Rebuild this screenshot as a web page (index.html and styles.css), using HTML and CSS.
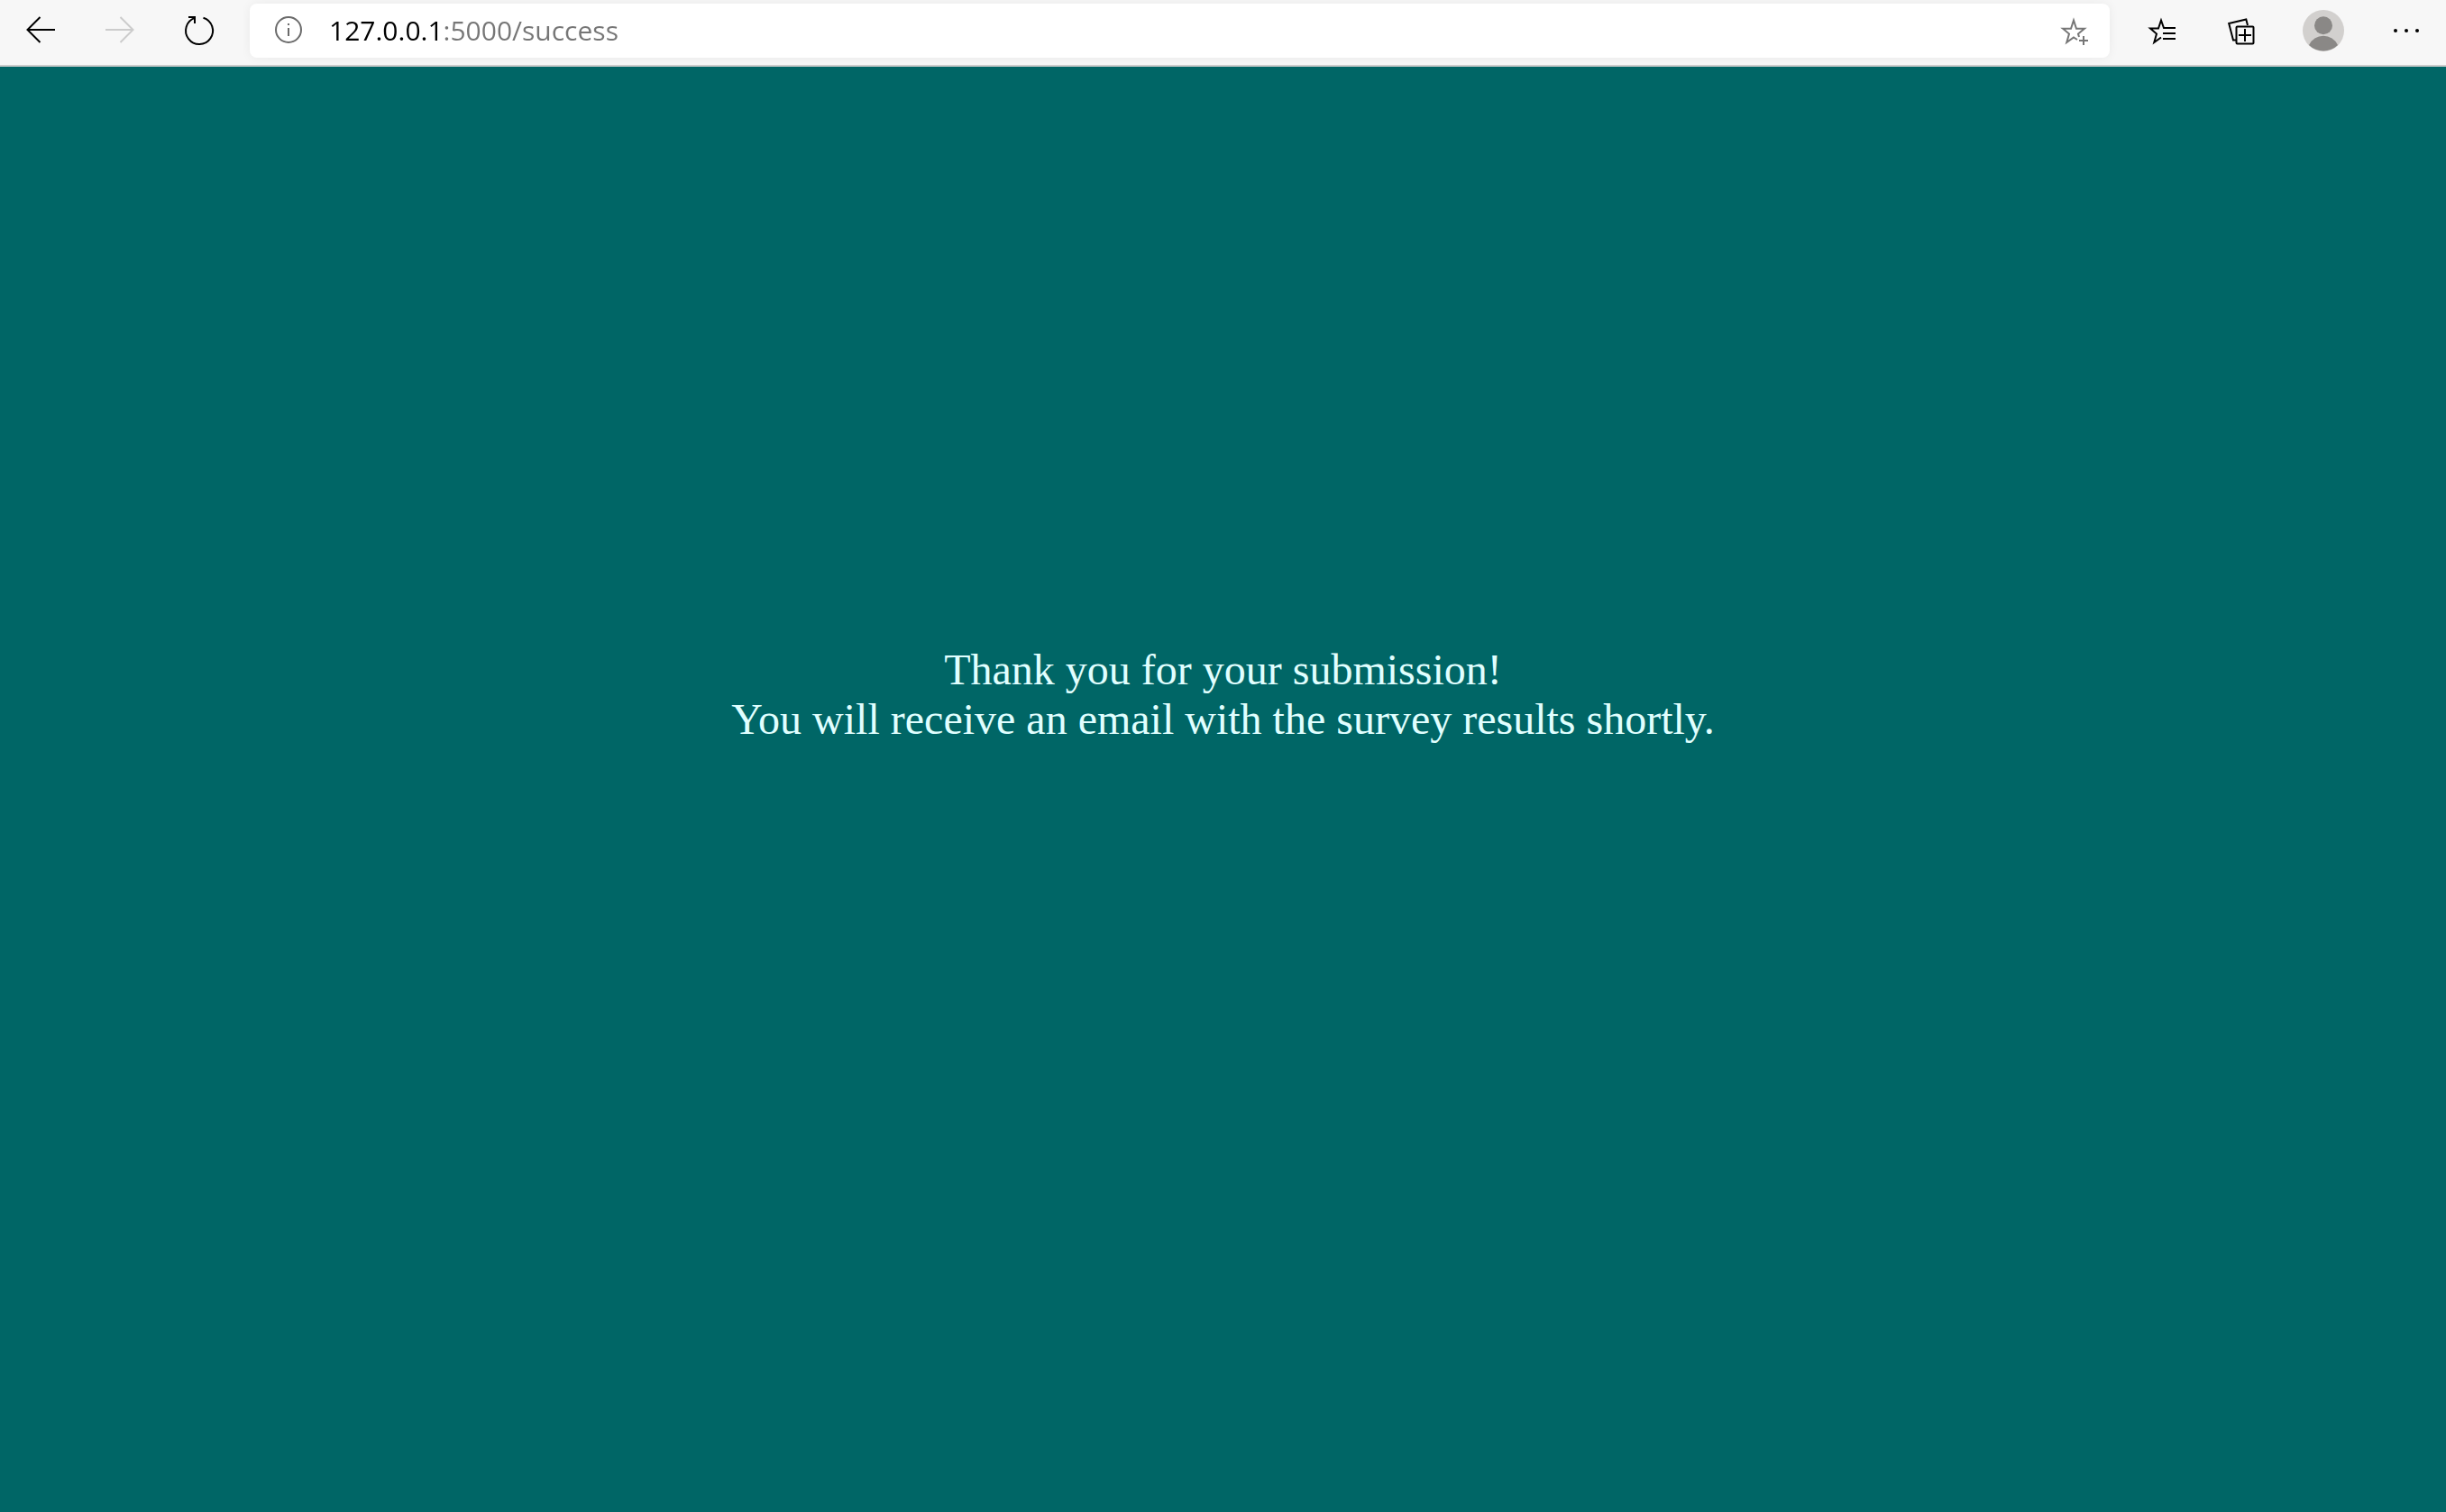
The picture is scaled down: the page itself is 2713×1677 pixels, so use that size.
FILE: index.html
```
<!DOCTYPE html>
<html lang="en">
<head>
<meta charset="utf-8">
<title>Survey submitted</title>
<link rel="stylesheet" href="styles.css">
</head>
<body>
<header class="toolbar">
  <nav class="group" aria-label="Navigation">
    <button class="tool" type="button" aria-label="Back">
      <svg class="icon" viewBox="0 0 60 60"><path d="M46 29H16M29.500 15l-14 14 14 14"/></svg>
    </button>
    <button class="tool" type="button" aria-label="Forward" disabled>
      <svg class="icon" viewBox="0 0 60 60"><path d="M14 29h30M30.500 15l14 14-14 14"/></svg>
    </button>
    <button class="tool" type="button" aria-label="Refresh">
      <svg class="icon" viewBox="0 0 60 60"><path d="M34.500 15.700A15 15 0 1 1 25 15.900M18 15H25V22"/></svg>
    </button>
  </nav>
  <form class="address">
    <button class="site-info" type="button" aria-label="View site information">
      <svg class="icon" viewBox="0 0 60 60"><circle cx="30" cy="29" r="14"/><path d="M30 27v9M30 22v2"/></svg>
    </button>
    <input class="url" type="text" aria-label="Address" value="127.0.0.1:5000/success" spellcheck="false">
    <button class="add-favorite" type="button" aria-label="Add this page to favorites">
      <svg class="icon" viewBox="0 0 60 60"><path d="M36 37L35 33.500 42 27.700H33L30 18.500 27 27.700H18L25 33.500 22.300 43 30 37.500 34 40M41 36v10M36 41h10"/></svg>
    </button>
  </form>
  <div class="group group-end">
    <button class="tool" type="button" aria-label="Favorites">
      <svg class="icon" viewBox="0 0 60 60"><path d="M46 27H33L30 18.500 27 27.500H18L25 33.500 22.300 43 30 37.500M32 33h14M32 39h14"/></svg>
    </button>
    <button class="tool" type="button" aria-label="Collections">
      <svg class="icon" viewBox="0 0 60 60"><rect x="23.500" y="25.500" width="19" height="19" rx="1"/><path d="M33 28v14M26 35h14M36 24L34.300 17.500 15.200 22 20 40.500H23"/></svg>
    </button>
    <button class="tool" type="button" aria-label="Profile">
      <svg class="avatar" viewBox="0 0 60 60"><circle class="avatar-disc" cx="30" cy="30" r="23"/><circle cx="30" cy="24.300" r="10"/><path d="M14 46A17.600 17.600 0 0 1 46 46A23 23 0 0 1 14 46Z"/></svg>
    </button>
    <button class="tool" type="button" aria-label="Settings and more">
      <svg class="dots" viewBox="0 0 60 60"><circle cx="20" cy="30" r="2"/><circle cx="32" cy="30" r="2"/><circle cx="44" cy="30" r="2"/></svg>
    </button>
  </div>
</header>
<main class="page">
  <p class="message">Thank you for your submission!<br>You will receive an email with the survey results shortly.</p>
</main>
</body>
</html>
```
FILE: styles.css
```
* {
  box-sizing: border-box;
}

body {
  display: flex;
  flex-direction: column;
  min-height: 100vh;
  margin: 0;
  background: #006666;
}

.toolbar {
  display: flex;
  gap: 12px;
  padding: 4px 1px 8px;
  border-bottom: 2px solid #cccccc;
  background: #f7f7f7;
}

.group {
  display: flex;
}

button {
  display: flex;
  align-items: center;
  justify-content: center;
  height: 60px;
  padding: 0;
  border: 0;
  background: none;
  color: #000000;
}

.tool {
  width: 88px;
}

.group-end .tool {
  width: 90px;
}

.tool:disabled {
  color: #cccccc;
}

svg {
  display: block;
  flex: none;
  width: 60px;
  height: 60px;
}

.icon {
  fill: none;
  stroke: currentColor;
  stroke-width: 2;
}

.avatar {
  fill: #8a8886;
}

.avatar-disc {
  fill: #d2d0ce;
}

.dots {
  fill: #000000;
}

.address {
  display: flex;
  flex: 1;
  min-width: 0;
  border-radius: 8px;
  background: #ffffff;
  box-shadow: 0 0 12px rgba(0, 0, 0, 0.06);
}

.site-info {
  width: 86px;
  color: #6b6b6b;
}

.add-favorite {
  width: 80px;
  color: #767676;
}

/* The host is black and the rest of the URL is grey. */
.url {
  flex: 1;
  min-width: 0;
  height: 60px;
  padding: 0 0 2px 2px;
  border: 0;
  outline: 0;
  background: linear-gradient(to right, #000000 130px, #767676 130px);
  background-clip: text;
  -webkit-background-clip: text;
  -webkit-text-fill-color: transparent;
  color: #767676;
  font: 30px/40px "Segoe UI", "Open Sans", sans-serif;
}

.page {
  display: grid;
  flex: 1;
  grid-template-rows: 2fr 3fr;
}

.message {
  grid-row: 2;
  margin: 0;
  color: #e0ffff;
  font: 48px/55px "Times New Roman", "Liberation Serif", serif;
  text-align: center;
}
```
